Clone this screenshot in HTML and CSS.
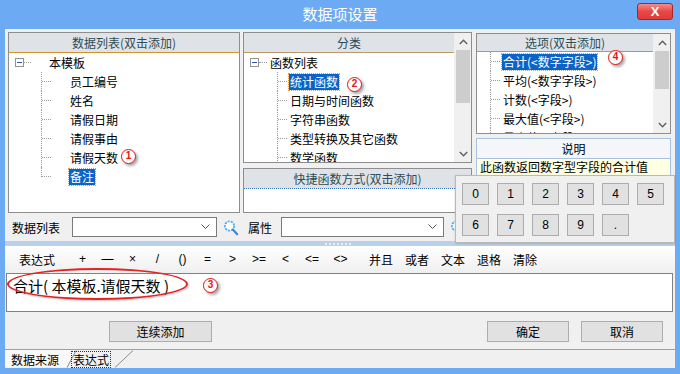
FILE: index.html
```html
<!DOCTYPE html>
<html lang="zh-CN">
<head>
<meta charset="utf-8">
<title>数据项设置</title>
<link rel="stylesheet" href="styles.css">
</head>
<body>
<div class="window">
  <div class="titlebar">
    <span class="tspacer"></span>
    <span class="title">数据项设置</span>
    <span class="close">X</span>
  </div>
  <div class="client">
    <div class="top">
      <div class="col col1">
        <div class="panel p1">
          <div class="phead line-orange">数据列表(双击添加)</div>
          <div class="tree">
            <div class="root r1"><span class="minus"></span><span class="hl"></span><span class="lbl">本模板</span></div>
            <div class="kids k1">
              <div class="kid"><span class="lbl">员工编号</span></div>
              <div class="kid"><span class="lbl">姓名</span></div>
              <div class="kid"><span class="lbl">请假日期</span></div>
              <div class="kid"><span class="lbl">请假事由</span></div>
              <div class="kid"><span class="lbl">请假天数</span></div>
              <div class="kid last"><span class="lbl sel">备注</span></div>
            </div>
          </div>
        </div>
        <div class="field f1">
          <span class="flabel">数据列表</span>
          <span class="combo c1"><svg class="chev" width="9" height="5" viewBox="0 0 9 5"><path d="M0.5 0.5 L4.5 4.5 L8.5 0.5" fill="none" stroke="#555" stroke-width="1"/></svg></span>
          <svg class="search" width="16" height="17" viewBox="0 0 16 17"><circle cx="6.5" cy="7" r="4.6" fill="#fff" stroke="#52b0f2" stroke-width="1.8" stroke-dasharray="2.2 1"/><path d="M9.8 10.6 L14.2 15.2" stroke="#3d86cf" stroke-width="2.2" stroke-linecap="round"/></svg>
        </div>
      </div>
      <div class="col col2">
        <div class="panel p2">
          <div class="pmain">
            <div class="phead line-brown">分类</div>
            <div class="tree">
              <div class="root r2"><span class="minus"></span><span class="hl"></span><span class="lbl">函数列表</span></div>
              <div class="kids k2">
                <div class="kid"><span class="lbl sel">统计函数</span></div>
                <div class="kid"><span class="lbl">日期与时间函数</span></div>
                <div class="kid"><span class="lbl">字符串函数</span></div>
                <div class="kid"><span class="lbl">类型转换及其它函数</span></div>
                <div class="kid"><span class="lbl">数学函数</span></div>
              </div>
            </div>
          </div>
          <div class="vscroll">
            <span class="sbtn"><svg width="9" height="6" viewBox="0 0 9 6"><path d="M0.8 5 L4.5 1.2 L8.2 5" fill="none" stroke="#606060" stroke-width="1.4"/></svg></span>
            <div class="track"><div class="thumb thumb2"></div></div>
            <span class="sbtn"><svg width="9" height="6" viewBox="0 0 9 6"><path d="M0.8 1 L4.5 4.8 L8.2 1" fill="none" stroke="#606060" stroke-width="1.4"/></svg></span>
          </div>
        </div>
        <div class="panel p4">
          <div class="phead line-dotblue">快捷函数方式(双击添加)</div>
        </div>
        <div class="field f2">
          <span class="flabel">属性</span>
          <span class="combo c2"><svg class="chev" width="9" height="5" viewBox="0 0 9 5"><path d="M0.5 0.5 L4.5 4.5 L8.5 0.5" fill="none" stroke="#555" stroke-width="1"/></svg></span>
          <svg class="search" width="16" height="17" viewBox="0 0 16 17"><circle cx="6.5" cy="7" r="4.6" fill="#fff" stroke="#52b0f2" stroke-width="1.8" stroke-dasharray="2.2 1"/><path d="M9.8 10.6 L14.2 15.2" stroke="#3d86cf" stroke-width="2.2" stroke-linecap="round"/></svg>
        </div>
      </div>
      <div class="col col3">
        <div class="panel p3">
          <div class="pmain">
            <div class="phead p3head line-orange">选项(双击添加)</div>
            <div class="tree">
              <div class="kids k3">
                <div class="kid"><span class="lbl sel">合计(&lt;数字字段&gt;)</span></div>
                <div class="kid"><span class="lbl">平均(&lt;数字字段&gt;)</span></div>
                <div class="kid"><span class="lbl">计数(&lt;字段&gt;)</span></div>
                <div class="kid"><span class="lbl">最大值(&lt;字段&gt;)</span></div>
                <div class="kid"><span class="lbl">最小值(&lt;字段&gt;)</span></div>
              </div>
            </div>
          </div>
          <div class="vscroll">
            <span class="sbtn"><svg width="9" height="6" viewBox="0 0 9 6"><path d="M0.8 5 L4.5 1.2 L8.2 5" fill="none" stroke="#606060" stroke-width="1.4"/></svg></span>
            <div class="track"><div class="thumb thumb3"></div></div>
            <span class="sbtn"><svg width="9" height="6" viewBox="0 0 9 6"><path d="M0.8 1 L4.5 4.8 L8.2 1" fill="none" stroke="#606060" stroke-width="1.4"/></svg></span>
          </div>
        </div>
        <div class="panel p5">
          <div class="dhead">说明</div>
          <div class="desc">此函数返回数字型字段的合计值</div>
        </div>
      </div>
    </div>
    <div class="splitter"><span class="grip"></span></div>
    <div class="toolbar">
      <span class="tb-title">表达式</span>
      <span class="op">+</span>
      <span class="op">—</span>
      <span class="op">×</span>
      <span class="op">/</span>
      <span class="op">()</span>
      <span class="op">=</span>
      <span class="op">&gt;</span>
      <span class="op wide">&gt;=</span>
      <span class="op">&lt;</span>
      <span class="op wide">&lt;=</span>
      <span class="op wide2">&lt;&gt;</span>
      <span class="word first">并且</span>
      <span class="word">或者</span>
      <span class="word">文本</span>
      <span class="word">退格</span>
      <span class="word">清除</span>
    </div>
    <div class="expr">合计( 本模板.请假天数 )</div>
    <div class="btnrow">
      <span class="btn b-add">连续添加</span>
      <span class="btn b-ok">确定</span>
      <span class="btn b-cancel">取消</span>
    </div>
    <div class="tabs">
      <svg class="tablines" width="670" height="18" viewBox="0 0 670 18">
        <polygon points="0,0 71,0 62,17 0,17" fill="#f9f9f9"/>
        <path d="M62 17.5 L71 0.5" stroke="#8a8a8a" stroke-width="1" fill="none"/>
        <path d="M110 17.5 L128 0.5" stroke="#8a8a8a" stroke-width="1" fill="none"/>
      </svg>
      <span class="tab t1">数据来源</span>
      <span class="tab t2">表达式</span>
    </div>
  </div>

  <div class="keypad">
    <span class="key">0</span><span class="key">1</span><span class="key">2</span><span class="key">3</span><span class="key">4</span><span class="key">5</span>
    <span class="key">6</span><span class="key">7</span><span class="key">8</span><span class="key">9</span><span class="key">.</span>
  </div>

  <span class="ellipse"></span>
  <span class="anno a1">1</span>
  <span class="anno a2">2</span>
  <span class="anno a3">3</span>
  <span class="anno a4">4</span>
</div>
</body>
</html>
```
FILE: styles.css
```css
* { box-sizing: border-box; margin: 0; padding: 0; }
html, body { width: 680px; height: 374px; overflow: hidden; }
body {
  background: #6caaf4;
  font-family: "Noto Sans CJK SC", "Liberation Sans", sans-serif;
  font-size: 12px;
  color: #000;
}
.window {
  position: relative;
  width: 680px;
  height: 374px;
  background: #6caaf4;
  display: flex;
  flex-direction: column;
}

/* title bar */
.titlebar {
  height: 29px;
  display: flex;
  align-items: center;
}
.tspacer { width: 43px; }
.title {
  flex: 1;
  text-align: center;
  color: #fff;
  font-size: 15px;
  line-height: 20px;
  margin-top: -2px;
}
.close {
  width: 36px;
  height: 17px;
  margin-right: 7px;
  margin-top: -7px;
  border: 1px solid #a8262a;
  border-radius: 3px;
  background: linear-gradient(#f68b8b, #e84848 50%, #e03a3a);
  color: #fff;
  font-family: "Liberation Sans", sans-serif;
  font-weight: bold;
  font-size: 13px;
  line-height: 15px;
  text-align: center;
}

/* client */
.client {
  margin: 0 5px;
  height: 339px;
  background: #f0f0f0;
  display: flex;
  flex-direction: column;
}
.top {
  height: 212px;
  display: flex;
  padding: 3px 0 0 3px;
}
.col { display: flex; flex-direction: column; }
.col1 { width: 232px; }
.col2 { width: 229px; margin-left: 3px; }
.col3 { width: 195px; margin-left: 4px; }

.panel {
  border: 1px solid #8e8e8e;
  background: #fff;
  overflow: hidden;
}
.p1 { height: 181px; }
.p2 { height: 131px; display: flex; }
.p3 { height: 101px; margin-top: 1px; display: flex; }
.p4 { height: 45px; margin-top: 5px; }
.p5 { height: 70px; margin-top: 4px; border-color: #a9c2de; }
.pmain { flex: 1; min-width: 0; display: flex; flex-direction: column; }

.phead {
  height: 20px;
  line-height: 19px;
  text-align: center;
  background: #dfe3e8;
  color: #2d4c56;
  border-bottom: 1px solid #d4912d;
}
.p3head { height: 18px; line-height: 17px; }
.line-orange { border-bottom-color: #d4912d; }
.line-brown { border-bottom-color: #b99a6e; }
.line-dotblue { border-bottom: 1px dotted #3f77c0; }

/* trees */
.tree { overflow: hidden; flex: 1; }
.root {
  height: 19px;
  display: flex;
  align-items: center;
}
.minus {
  width: 9px;
  height: 9px;
  border: 1px solid #939393;
  background: #fff;
  position: relative;
}
.minus::after {
  content: "";
  position: absolute;
  left: 1px;
  top: 3px;
  width: 5px;
  height: 1px;
  background: #2b55b0;
}
.hl { width: 7px; border-top: 1px dotted #9a9a9a; }
.r1 .minus { margin-left: 6px; }
.r1 .lbl { margin-left: 17px; }
.r2 .minus { margin-left: 6px; }
.r2 .hl { width: 8px; }
.r2 .lbl { margin-left: 2px; }

.kid {
  position: relative;
  height: 19px;
  display: flex;
  align-items: center;
  white-space: nowrap;
}
.kid::before {
  content: "";
  position: absolute;
  left: 0;
  top: 0;
  bottom: 0;
  border-left: 1px dotted #9a9a9a;
}
.kid.last::before { bottom: 9px; }
.kid::after {
  content: "";
  position: absolute;
  left: 1px;
  top: 9px;
  width: 9px;
  border-top: 1px dotted #9a9a9a;
}
.k1 { margin-left: 32px; }
.k1 .kid { padding-left: 28px; }
.k2 { margin-left: 33px; }
.k2 .kid { padding-left: 12px; }
.k3 { margin-left: 13px; }
.k3 .kid { padding-left: 12px; }

.lbl { padding: 0 1px; line-height: 16px; }
.sel {
  background: #0a64c8;
  color: #fff;
  outline: 1px dotted #e89a3a;
}

/* scrollbars */
.vscroll {
  width: 17px;
  background: #f0f0f0;
  display: flex;
  flex-direction: column;
  border-left: 1px solid #f0f0f0;
}
.sbtn {
  height: 17px;
  display: flex;
  align-items: center;
  justify-content: center;
}
.track { flex: 1; padding: 0 1px; }
.thumb { background: #cdcdcd; }
.thumb2 { height: 53px; }
.thumb3 { height: 38px; }

/* fields */
.field {
  height: 28px;
  display: flex;
  align-items: center;
}
.f1 .flabel { margin-left: 4px; width: 60px; }
.f2 .flabel { margin-left: 5px; width: 33px; }
.combo {
  height: 20px;
  background: #fff;
  border: 1px solid #7a7a7a;
  display: flex;
  align-items: center;
  justify-content: flex-end;
  padding-right: 6px;
  margin-top: -1px;
}
.c1 { width: 145px; }
.c2 { width: 163px; }
.search { margin-left: 6px; margin-top: 1px; }

/* description */
.dhead {
  height: 20px;
  line-height: 19px;
  text-align: center;
  background: #f4f6f8;
  border-bottom: 1px solid #a9c2de;
}
.desc {
  height: 17px;
  line-height: 16px;
  background: #ffffe1;
  padding-left: 3px;
}

/* splitter */
.splitter {
  height: 5px;
  background: #b9d1ea;
  display: flex;
  align-items: center;
  padding-left: 320px;
}
.grip {
  width: 27px;
  height: 2px;
  background: repeating-linear-gradient(90deg, #e9eff7 0 2px, transparent 2px 4px);
}

/* toolbar */
.toolbar {
  height: 26px;
  display: flex;
  align-items: center;
  padding-left: 9px;
  background: linear-gradient(#ffffff, #f0f0f0);
}
.tb-title { width: 46px; text-align: center; margin-right: 10px; }
.op {
  width: 25px;
  text-align: center;
  font-family: "Liberation Sans", sans-serif;
  font-size: 12px;
}
.op.wide { width: 28px; }
.op.wide2 { width: 29px; }
.word { width: 36px; text-align: center; }
.word.first { margin-left: 8px; }

/* expression */
.expr {
  height: 39px;
  margin: 1px 2px 0 1px;
  background: #fff;
  border: 1px solid #828282;
  font-size: 15px;
  line-height: 18px;
  padding: 3px 0 0 6px;
}

/* buttons */
.btnrow {
  height: 21px;
  margin-top: 9px;
  display: flex;
}
.btn {
  height: 21px;
  line-height: 19px;
  text-align: center;
  background: #e1e1e1;
  border: 1px solid #adadad;
}
.b-add { width: 103px; margin-left: 104px; }
.b-ok { width: 82px; margin-left: auto; }
.b-cancel { width: 82px; margin-left: 12px; margin-right: 12px; }

/* tabs */
.tabs {
  position: relative;
  height: 19px;
  margin-top: 7px;
  border-top: 1px solid #a0a0a0;
  display: flex;
  align-items: center;
}
.tablines { position: absolute; left: 0; top: 0; }
.tab { position: relative; line-height: 15px; }
.t1 { margin-left: 6px; }
.t2 { margin-left: 13px; padding: 0 1px; outline: 1px dotted #333; outline-offset: 0; }

/* keypad popup */
.keypad {
  position: absolute;
  left: 455px;
  top: 175px;
  width: 220px;
  height: 68px;
  background: #f0f0f0;
  border: 1px solid #b9b9b9;
  box-shadow: 0 1px 2px rgba(0,0,0,0.15);
  display: grid;
  grid-template-columns: repeat(6, 27px);
  grid-auto-rows: 22px;
  column-gap: 8px;
  row-gap: 9px;
  padding: 7px 0 0 6px;
}
.key {
  background: #e1e1e1;
  border: 1px solid #adadad;
  text-align: center;
  line-height: 20px;
  font-family: "Liberation Sans", sans-serif;
  font-size: 12px;
}

/* annotations */
.ellipse {
  position: absolute;
  left: 7px;
  top: 268px;
  width: 181px;
  height: 32px;
  border: 2px solid #e52222;
  border-radius: 50%;
  box-shadow: 1px 1px 2px rgba(0,0,0,0.25);
}
.anno {
  position: absolute;
  width: 15px;
  height: 15px;
  border: 1.5px solid #e41414;
  border-radius: 50%;
  background: #fff;
  color: #e41414;
  font-family: "Liberation Sans", sans-serif;
  font-weight: bold;
  font-size: 10px;
  line-height: 12px;
  text-align: center;
  box-shadow: 2px 2px 3px rgba(0,0,0,0.35);
}
.a1 { left: 121px; top: 149px; }
.a2 { left: 347px; top: 77px; }
.a3 { left: 203px; top: 278px; }
.a4 { left: 608px; top: 50px; }
```
